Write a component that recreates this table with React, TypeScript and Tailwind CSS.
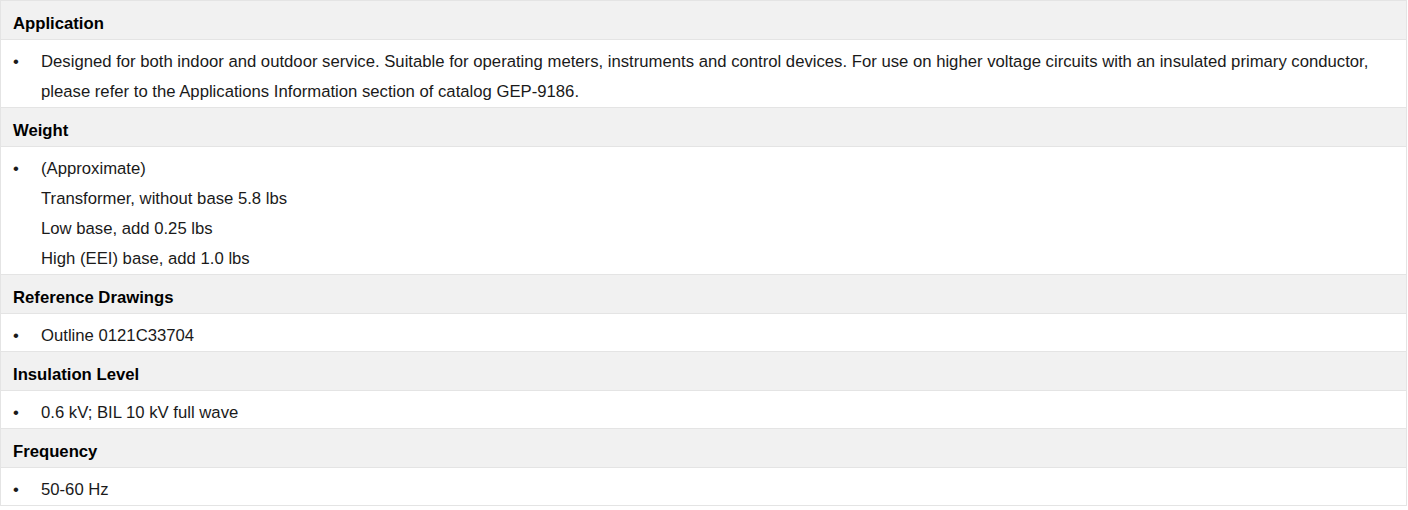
import React from "react";

const sections: { title: string; items: string[][] }[] = [
  {
    title: "Application",
    items: [
      [
        "Designed for both indoor and outdoor service. Suitable for operating meters, instruments and control devices. For use on higher voltage circuits with an insulated primary conductor, please refer to the Applications Information section of catalog GEP-9186.",
      ],
    ],
  },
  {
    title: "Weight",
    items: [
      [
        "(Approximate)",
        "Transformer, without base 5.8 lbs",
        "Low base, add 0.25 lbs",
        "High (EEI) base, add 1.0 lbs",
      ],
    ],
  },
  { title: "Reference Drawings", items: [["Outline 0121C33704"]] },
  { title: "Insulation Level", items: [["0.6 kV; BIL 10 kV full wave"]] },
  { title: "Frequency", items: [["50-60 Hz"]] },
];

export default function App() {
  return (
    <div
      className="w-[1408px] h-[510px] bg-white text-[16.7px] text-[#1a1a1a]"
      style={{ fontFamily: '"Liberation Sans", Arial, sans-serif' }}
    >
      <div className="w-[1407px] border-t border-l border-r border-[#e4e4e4]">
        {sections.map((s) => (
          <div key={s.title}>
            <div className="h-[39px] bg-[#f1f1f1] border-b border-[#e4e4e4] pt-[8px] leading-[30px] pl-[12px] font-bold text-black">
              {s.title}
            </div>
            {s.items.map((lines, i) => (
              <div
                key={i}
                className="flex border-b border-[#e4e4e4] pt-[7px] leading-[30px]"
              >
                <div className="w-[40px] pl-[12px] shrink-0">•</div>
                <div className="pr-[20px]">
                  {lines.map((l, j) => (
                    <div key={j}>{l}</div>
                  ))}
                </div>
              </div>
            ))}
          </div>
        ))}
      </div>
    </div>
  );
}
